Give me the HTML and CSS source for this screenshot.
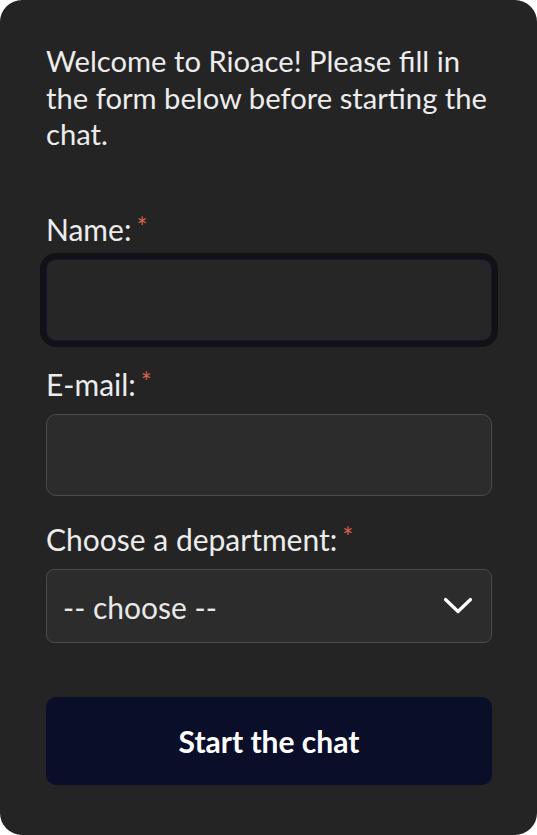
FILE: index.html
```html
<!DOCTYPE html>
<html lang="en">
<head>
<meta charset="utf-8">
<title>Rioace chat</title>
<link rel="stylesheet" href="styles.css">
</head>
<body>
<div class="card">
  <p class="intro">Welcome to Rioace! Please fill in the form below before starting the chat.</p>
  <form class="form">
    <div class="field">
      <label class="label" for="name">Name:<span class="req">*</span></label>
      <div class="input focused" id="name"></div>
    </div>
    <div class="field">
      <label class="label" for="email">E-mail:<span class="req">*</span></label>
      <div class="input" id="email"></div>
    </div>
    <div class="field">
      <label class="label" for="dept">Choose a department:<span class="req">*</span></label>
      <div class="select" id="dept">
        <span class="select-text">-- choose --</span>
        <svg class="chev" width="30" height="18" viewBox="0 0 30 18"><path d="M2.5 2.5 L15 14.5 L27.5 2.5" fill="none" stroke="#ffffff" stroke-width="3.2" stroke-linecap="round" stroke-linejoin="round"/></svg>
      </div>
    </div>
    <div class="btn">Start the chat</div>
  </form>
</div>
</body>
</html>
```
FILE: styles.css
```css
html, body {
  margin: 0;
  padding: 0;
  background: #ffffff;
}
body {
  width: 537px;
  height: 835px;
  font-family: Lato, "Liberation Sans", sans-serif;
  color: #f0f0f0;
}
.card {
  box-sizing: border-box;
  width: 537px;
  height: 835px;
  background: #242424;
  border-radius: 22px;
  padding: 43px 45px 0 46px;
}
.intro {
  margin: 0;
  font-size: 29.2px;
  line-height: 36.5px;
  color: #ececec;
}
.form {
  display: flex;
  flex-direction: column;
  margin-top: 59px;
}
.field {
  display: flex;
  flex-direction: column;
}
.label {
  font-size: 30px;
  line-height: 34px;
  color: #ececec;
}
.req {
  color: #d9604e;
  font-size: 26px;
  vertical-align: top;
  margin-left: 5px;
  line-height: 22px;
  position: relative;
  top: 4px;
}
.input {
  box-sizing: border-box;
  height: 82px;
  margin-top: 13px;
  margin-bottom: 26px;
  border: 1.5px solid #4b4b4b;
  border-radius: 10px;
  background: #2c2c2c;
}
.input.focused {
  background: #262626;
  border-color: #141838;
  box-shadow: 0 0 0 6px #121216;
}
.select {
  box-sizing: border-box;
  height: 74px;
  margin-top: 13px;
  border: 1.5px solid #4b4b4b;
  border-radius: 8px;
  background: #2c2c2c;
  display: flex;
  align-items: center;
  justify-content: space-between;
  padding: 0 18px 0 16px;
}
.select-text {
  font-size: 30px;
  color: #e8e8e8;
  position: relative;
  top: 1px;
}
.chev {
  display: block;
}
.btn {
  margin-top: 54px;
  height: 88px;
  border-radius: 10px;
  background: #0a0e29;
  color: #ffffff;
  font-weight: 700;
  font-size: 30px;
  display: flex;
  align-items: center;
  justify-content: center;
}
```
